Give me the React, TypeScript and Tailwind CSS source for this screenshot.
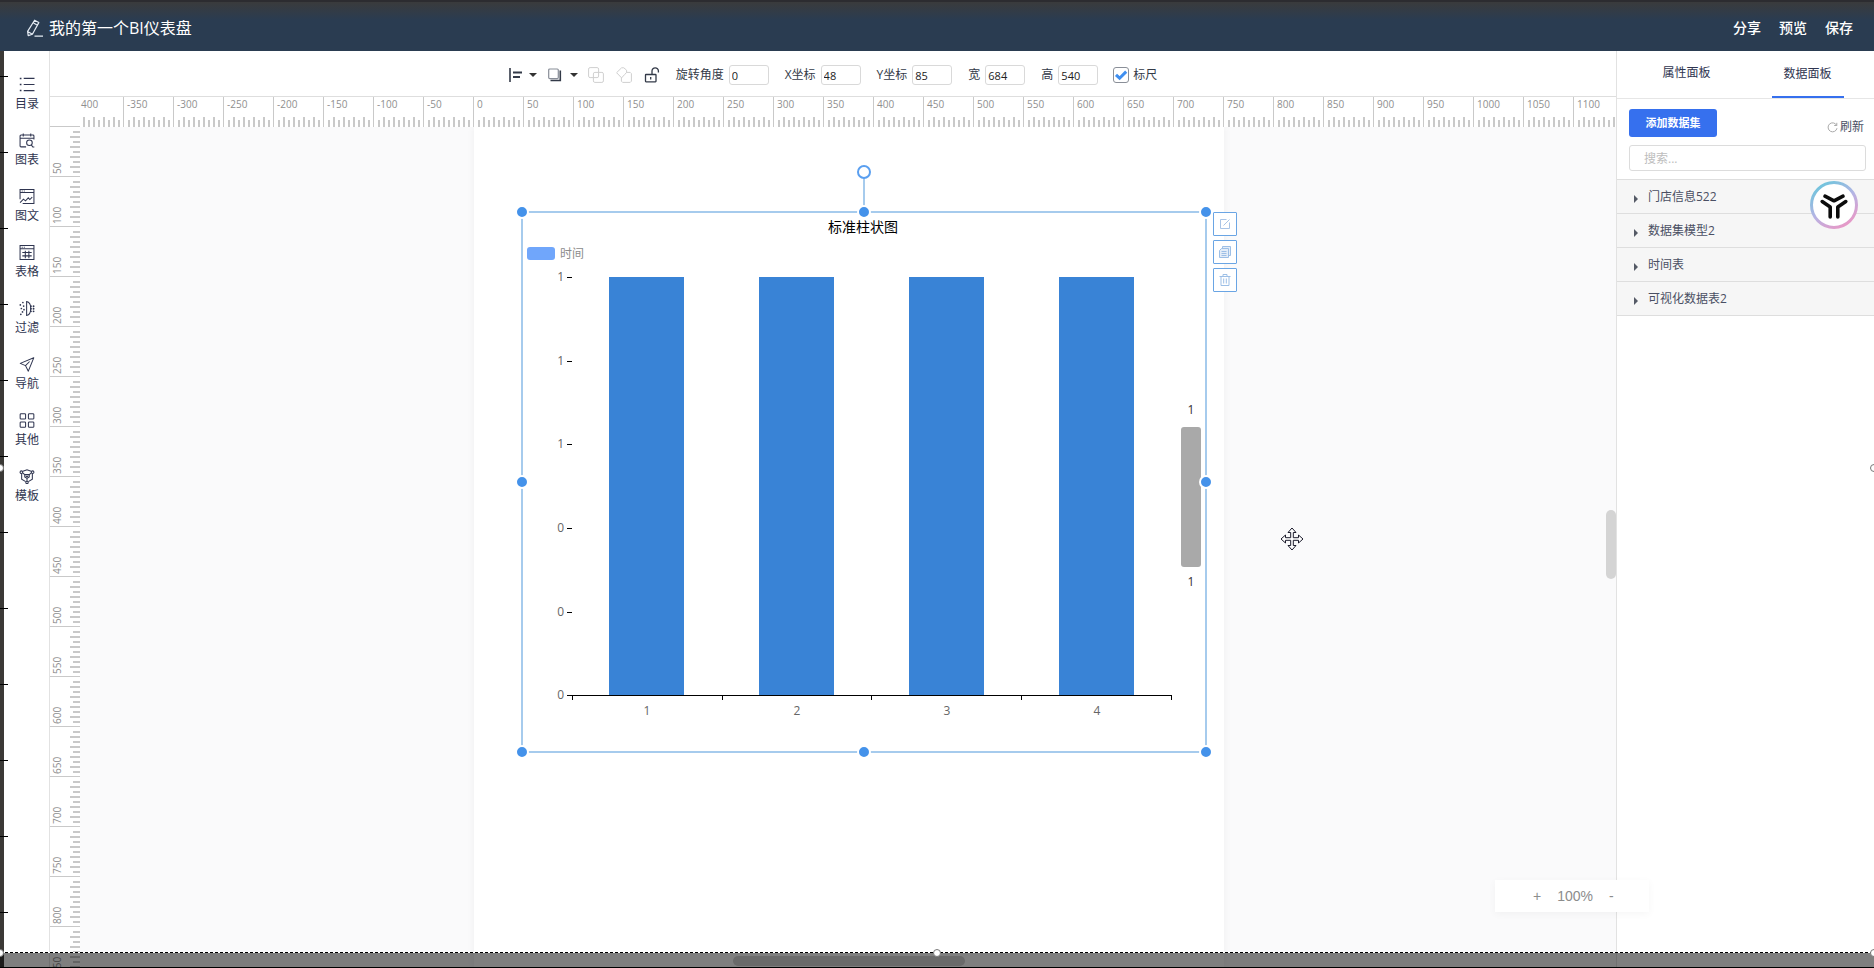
import React, { useState } from "react";

const ORIGIN_X = 394;
const H_START = -390;
const H_END = 1140;
const V_END = 850;

const MENU = [
  { label: "目录", icon: "list" },
  { label: "图表", icon: "chart" },
  { label: "图文", icon: "media" },
  { label: "表格", icon: "table" },
  { label: "过滤", icon: "filter" },
  { label: "导航", icon: "nav" },
  { label: "其他", icon: "other" },
  { label: "模板", icon: "template" },
];

const DATASETS = ["门店信息522", "数据集模型2", "时间表", "可视化数据表2"];

const FIELDS = [
  { id: "rotate", label: "旋转角度", value: "0" },
  { id: "x", label: "X坐标", value: "48" },
  { id: "y", label: "Y坐标", value: "85" },
  { id: "w", label: "宽", value: "684" },
  { id: "h", label: "高", value: "540" },
];

function range(from: number, to: number, step: number) {
  const out: number[] = [];
  for (let i = from; i <= to; i += step) out.push(i);
  return out;
}

function MenuIcon({ name }: { name: string }) {
  return (
    <svg className="w-4 h-4" viewBox="0 0 16 16" fill="none" stroke="#2f3550" strokeWidth="1.1">
      {name === "list" && (
        <>
          <path d="M4.500 1.500H16M4.500 8H16M4.500 14.500H16" strokeWidth="1.300" />
          <path d="M0.300 1.500h1.800M0.300 8h1.800M0.300 14.500h1.800" strokeWidth="1.600" />
        </>
      )}
      {name === "chart" && (
        <>
          <path d="M15.400 7V3.200a1 1 0 0 0-1-1H1.600a1 1 0 0 0-1 1v10.600a1 1 0 0 0 1 1H7M0.600 5.700h14.800M4 0.400v3.400M12 0.400v3.400" />
          <circle cx="10.600" cy="10.400" r="3" />
          <path d="M12.600 12.700l1.600 2.200h1.600" />
        </>
      )}
      {name === "media" && (
        <>
          <path d="M0.600 11V0.600h14.800v14.800H3.400M0.600 3.800h14.800" />
          <path d="M0.600 14.600l3.600-3.800 2.200 1.800 3-3.200 1.600 1.800 2.600-2.600" />
          <path d="M2.400 2.200h1M4.600 2.200h1" />
        </>
      )}
      {name === "table" && (
        <>
          <path d="M0.600 0.600h14.800v14.800H0.600zM0.600 4h14.800" />
          <path d="M2.400 2.300h1M4.600 2.300h1" />
          <path d="M3 8h10M3 11.600h10M6.200 6v8M10 6v8" />
        </>
      )}
      {name === "filter" && (
        <>
          <path d="M7.600 0.600v14.800c3.400-0.600 4.400-3.800 4.400-7.400S11 1.200 7.600 0.600z" />
          <g fill="#2f3550" stroke="none">
            <circle cx="3.600" cy="1.600" r="0.900" /><circle cx="0.900" cy="4.200" r="0.900" /><circle cx="4.400" cy="5.400" r="0.900" />
            <circle cx="2" cy="8" r="0.900" /><circle cx="4.800" cy="9.200" r="0.900" /><circle cx="3.200" cy="11.600" r="0.900" /><circle cx="1.400" cy="14.200" r="0.900" />
            <circle cx="12.200" cy="5.600" r="1" /><circle cx="12.200" cy="8.300" r="1" /><circle cx="12.200" cy="11" r="1" />
            <circle cx="15" cy="5.600" r="1" /><circle cx="15" cy="8.300" r="1" /><circle cx="15" cy="11" r="1" />
          </g>
        </>
      )}
      {name === "nav" && <path d="M15.200 0.900L0.800 6.800l5.600 2.400 3 5.900zM6.400 9.200l4.400-4.400" strokeLinejoin="round" />}
      {name === "other" && (
        <>
          <rect x="0.700" y="0.700" width="5.800" height="5.800" rx="1" />
          <rect x="9.500" y="0.700" width="5.800" height="5.800" rx="1" />
          <rect x="0.700" y="9.500" width="5.800" height="5.800" rx="1" />
          <rect x="9.500" y="9.500" width="5.800" height="5.800" rx="1" />
        </>
      )}
      {name === "template" && (
        <>
          <path d="M3.600 2.400L8 0.800l4.400 1.600M2.300 5v5.800l4.300 2.700M13.700 5v5.800l-4.300 2.700" />
          <circle cx="2" cy="3.400" r="1.400" />
          <circle cx="14" cy="3.400" r="1.400" />
          <circle cx="8" cy="14.300" r="1.300" />
          <path d="M3.400 4.200L5.600 6h4.800l2.200-1.800M5.600 6v2.400L8 10l2.400-1.600V6M8 10v3" />
          <path d="M6.600 7.400L8 8.300l1.400-0.900" />
        </>
      )}
    </svg>
  );
}

function HRuler() {
  return (
    <svg className="block h-[30px] flex-1 min-w-0 bg-white" fontSize="10" fill="#8f8f8f">
      {range(H_START, H_END, 5).map((v) => {
        const x = ORIGIN_X + v;
        const top = v % 50 === 0 ? 0 : v % 10 === 0 ? 20 : 23;
        return <rect key={v} x={x - 1} y={top} width={v % 50 === 0 ? 1 : 2} height={30 - top} fill="#c9c9c9" />;
      })}
      <text x="1" y="11">400</text>
      {range(-350, 1100, 50).map((v) => (
        <text key={v} x={ORIGIN_X + v + 3} y="11">{v}</text>
      ))}
    </svg>
  );
}

function VRuler() {
  return (
    <svg className="block w-[30px] shrink-0 h-full bg-white" fontSize="10" fill="#8f8f8f">
      {range(5, V_END, 5).map((v) => {
        const left = v % 50 === 0 ? 0 : v % 10 === 0 ? 20 : 23;
        return <rect key={v} x={left} y={v - 1} width={30 - left} height={v % 50 === 0 ? 1 : 2} fill="#c9c9c9" />;
      })}
      {range(50, V_END, 50).map((v) => (
        <text key={v} transform={`translate(11 ${v - 3}) rotate(-90)`}>{v}</text>
      ))}
    </svg>
  );
}

function BarChart() {
  const ticks = [
    { y: 65, label: "1" }, { y: 149, label: "1" }, { y: 232, label: "1" },
    { y: 316, label: "0" }, { y: 400, label: "0" }, { y: 483, label: "0" },
  ];
  return (
    <svg className="block w-full h-full" fontSize="12" fill="#666">
      <text x="341" y="20" fontSize="14" fill="#000" textAnchor="middle">标准柱状图</text>
      <rect x="5" y="35" width="28" height="13" rx="3" fill="#70a6fb" />
      <text x="38" y="46" fill="#8c8c8c">时间</text>
      {[1, 2, 3, 4].map((n, i) => (
        <g key={n}>
          <rect x={87 + i * 150} y="65" width="75" height="418" fill="#3983d6" />
          <text x={125 + i * 150} y="503" textAnchor="middle">{n}</text>
        </g>
      ))}
      {ticks.map((t) => (
        <g key={t.y}>
          <rect x="45" y={t.y} width="5" height="1" fill="#000" />
          <text x="42" y={t.y + 4} textAnchor="end">{t.label}</text>
        </g>
      ))}
      <rect x="50" y="483" width="600" height="1" fill="#000" />
      {[50, 200, 349, 499, 649].map((x) => <rect key={x} x={x} y="484" width="1" height="4" fill="#000" />)}
      <text x="669" y="202" textAnchor="middle" fill="#333">1</text>
      <rect x="659" y="215" width="20" height="140" rx="3" fill="#a9a9a9" />
      <text x="669" y="374" textAnchor="middle" fill="#333">1</text>
    </svg>
  );
}

function Selection() {
  const dots = [[0, 0], [342, 0], [684, 0], [0, 270], [684, 270], [0, 540], [342, 540], [684, 540]];
  return (
    <svg className="absolute inset-0 w-full h-full overflow-visible pointer-events-none">
      <rect x="0" y="0" width="684" height="540" fill="none" stroke="#a6cbed" strokeWidth="2" />
      <path d="M342 -34V0" stroke="#a6cbed" strokeWidth="2" />
      <circle cx="342" cy="-40" r="6" fill="#fff" stroke="#5a9ff0" strokeWidth="2" />
      {dots.map(([x, y]) => <circle key={`${x}-${y}`} cx={x} cy={y} r="6" fill="#4492ea" stroke="#fff" strokeWidth="2" />)}
    </svg>
  );
}

function WidgetTools() {
  const cls = "w-6 h-6 flex items-center justify-center bg-white border border-[#6aa5e4] rounded-[1px]";
  return (
    <div className="absolute left-[691px] top-0 flex flex-col gap-1">
      <button className={cls} aria-label="编辑">
        <svg className="w-3 h-3" viewBox="0 0 12 12" fill="none" stroke="#a9c4e6"><path d="M7.500 1.500h-6v9h9v-6M4.500 7.500l6-6" /></svg>
      </button>
      <button className={cls} aria-label="复制">
        <svg className="w-3 h-3" viewBox="0 0 12 12" fill="#e4edf8" stroke="#9dbfe6"><path d="M3.500 2.500v-2h8v9h-2M0.500 4.500l2-2h7v9h-9zM2.500 5.500h5M2.500 7.500h5M2.500 9.500h5" /></svg>
      </button>
      <button className={cls} aria-label="删除">
        <svg className="w-3 h-3" viewBox="0 0 12 12" fill="none" stroke="#9dbfe6"><path d="M0.500 2.500h11M4 2.500v-2h4v2M2 2.500v9h8v-9M4.700 4.500v5M7.300 4.500v5" /></svg>
      </button>
    </div>
  );
}

function Caret() {
  return <svg className="w-2 h-1" viewBox="0 0 8 4" fill="#333"><path d="M0 0h8L4 4z" /></svg>;
}

function Toolbar() {
  const [ruler, setRuler] = useState(true);
  return (
    <div className="h-[46px] pt-[3px] shrink-0 bg-white border-b border-[#dedede] flex items-center justify-center text-xs text-[#333a48]">
      <button className="flex items-center gap-[7px]" aria-label="对齐">
        <svg className="w-[13px] h-[14px]" viewBox="0 0 13 14" stroke="#333a48" fill="none"><path d="M1 0v14" strokeWidth="1.600" /><path d="M4 4.500h9M4 9h7" strokeWidth="2" /></svg>
        <Caret />
      </button>
      <button className="flex items-center gap-2 ml-[11px]" aria-label="层级">
        <svg className="w-[14px] h-[14px]" viewBox="0 0 14 14" fill="none"><rect x="0.700" y="1" width="9.600" height="9.600" rx="1" stroke="#888d97" strokeWidth="1.200" /><path d="M12.300 2.500v10H2.500" stroke="#333a48" strokeWidth="1.600" /></svg>
        <Caret />
      </button>
      <button className="ml-[10px]" aria-label="组合">
        <svg className="w-4 h-4" viewBox="0 0 16 16" fill="none" stroke="#cfcfcf"><rect x="0.600" y="0.600" width="10" height="10" rx="1.500" /><rect x="5.400" y="5.400" width="10" height="10" rx="1.500" /></svg>
      </button>
      <button className="ml-3" aria-label="取消组合">
        <svg className="w-4 h-4" viewBox="0 0 16 16" fill="none" stroke="#cfcfcf"><path d="M10.600 5.500V3.200L7.800 0.800H5.600L0.600 5.700l5 5.200M10.600 5.400h3.600l1.200 1.200v7.600l-1.200 1.200H6.600l-1.200-1.200V11l3.200-3.400z" strokeLinejoin="round" /></svg>
      </button>
      <button className="ml-3" aria-label="解锁">
        <svg className="w-4 h-4" viewBox="0 0 16 16" fill="none" stroke="#333a48" strokeWidth="1.300"><rect x="1.500" y="7.500" width="10.500" height="7.300" rx="0.500" /><path d="M8 7.500V4a3.200 3.200 0 0 1 6.400 0v1.500M6.700 10v2.600" /></svg>
      </button>
      {FIELDS.map((f) => (
        <div key={f.id} className="flex items-center gap-[5px] ml-4">
          <label htmlFor={f.id}>{f.label}</label>
          <input id={f.id} defaultValue={f.value} className="w-10 h-5 pl-[2px] border border-[#d9d9d9] rounded-[3px] text-[11px] text-[#222] bg-white outline-none" />
        </div>
      ))}
      <label className="flex items-center gap-1 ml-[15px]">
        <span className="relative w-4 h-4 block">
          <input type="checkbox" checked={ruler} onChange={() => setRuler(!ruler)} className="appearance-none block w-4 h-4 border border-[#8a8f98] rounded-[3px] bg-white" />
          {ruler && <svg className="absolute inset-0 w-4 h-4 pointer-events-none" viewBox="0 0 16 16" fill="none" stroke="#3f8ff0" strokeWidth="3"><path d="M3 7.800l3.600 3.400 6.600-6.600" /></svg>}
        </span>
        标尺
      </label>
    </div>
  );
}

function Panel() {
  return (
    <aside className="w-[258px] shrink-0 bg-white border-l border-[#e2e2e2] text-xs text-[#4a4f63]">
      <div className="h-12 pl-[9px] pr-[6px] border-b border-[#e6e6e6] flex text-[#2f3550]">
        <button className="flex-1 pb-1">属性面板</button>
        <button className="flex-1 flex flex-col items-center">
          <span className="flex-1 flex items-center">数据面板</span>
          <span className="w-[72px] h-[2px] bg-[#3670ee]"></span>
        </button>
      </div>
      <div className="pl-3 pt-[10px] pb-2 pr-2">
        <div className="flex justify-between items-end">
          <button className="w-[88px] h-7 rounded-[3px] bg-[#3670ee] text-white text-[11px] font-bold">添加数据集</button>
          <button className="flex items-center gap-[2px] pb-[2px] pr-[2px]">
            <svg className="w-[11px] h-[11px]" viewBox="0 0 11 11" fill="none" stroke="#aaa"><path d="M9.600 3.300A4.500 4.500 0 1 0 10 6.200M9.800 0.800v2.700H7.200" /></svg>
            刷新
          </button>
        </div>
        <input aria-label="搜索" placeholder="搜索..." className="mt-2 w-full h-[26px] pl-[14px] border border-[#dcdcdc] rounded-[3px] outline-none placeholder:text-[#bdbdbd]" />
      </div>
      <ul>
        {DATASETS.map((d) => (
          <li key={d} className="border-t border-[#dedede] last:border-b">
            <button className="w-full h-[33px] pl-[17px] flex items-center gap-[10px] bg-[#f6f6f6] text-left">
              <svg className="w-1 h-2 mt-1" viewBox="0 0 4 8" fill="#555a66"><path d="M0 0l4 4-4 4z" /></svg>
              {d}
            </button>
          </li>
        ))}
      </ul>
    </aside>
  );
}

function Logo() {
  return (
    <svg className="absolute right-4 top-[181px] w-12 h-12" viewBox="0 0 48 48" fill="none">
      <defs>
        <linearGradient id="ring" x1="0.200" y1="0" x2="0.800" y2="1">
          <stop offset="0" stopColor="#6cc5dc" />
          <stop offset="0.500" stopColor="#b5b4e4" />
          <stop offset="1" stopColor="#ec96c4" />
        </linearGradient>
      </defs>
      <circle cx="24" cy="24" r="22.500" fill="#fff" stroke="url(#ring)" strokeWidth="3" />
      <path d="M15 15.200l9 4.600 9-4.600M12.200 20.600l8 5.400v10M35.800 20.600l-8 5.400v10" stroke="#0c0c0c" strokeWidth="3.600" strokeLinecap="round" strokeLinejoin="round" />
    </svg>
  );
}

export default function App() {
  return (
    <div className="relative h-screen w-full overflow-hidden flex flex-col bg-[#3b3936] font-['Open_Sans','Noto_Sans_CJK_SC',sans-serif]">
      <header className="h-[51px] shrink-0 pt-[2px] pl-[26px] pr-[21px] border-t-2 border-[#2c2c30] bg-linear-to-b from-[#3a3b3c] to-[#2a3c51] to-[18px] flex items-center justify-between text-white">
        <div className="flex items-center gap-[6px]">
          <svg className="w-[17px] h-[18px]" viewBox="0 0 17 18" fill="none" stroke="#e4ebf3" strokeWidth="1.200" strokeLinejoin="round"><path d="M8.600 1.200l4.200 2.400-6.400 11.600-4.200 1.400-0.600-4.200zM7.200 3.800l4.200 2.400M1.600 12.400l4.800 2.800M8.500 17.200H17" /></svg>
          <h1 className="text-base">我的第一个BI仪表盘</h1>
        </div>
        <nav className="flex gap-[18px] text-sm font-medium">
          <button>分享</button>
          <button>预览</button>
          <button>保存</button>
        </nav>
      </header>

      <div className="flex-1 min-h-0 flex pl-1">
        <nav className="w-[46px] shrink-0 pt-[26px] pl-px bg-white border-r border-[#e2e2e2] flex flex-col gap-5 items-center">
          {MENU.map((m) => (
            <button key={m.label} className="h-9 flex flex-col items-center gap-[3px] text-xs leading-[18px] text-[#2f3550]">
              <MenuIcon name={m.icon} />
              {m.label}
            </button>
          ))}
        </nav>

        <main className="flex-1 min-w-0 flex flex-col">
          <Toolbar />
          <div className="flex shrink-0 bg-white">
            <div className="w-[30px] shrink-0 border-b border-[#c9c9c9]"></div>
            <HRuler />
          </div>
          <div className="flex-1 min-h-0 flex">
            <VRuler />
            <div className="relative flex-1 min-w-0 bg-[#fafafb] overflow-hidden">
              <div className="absolute left-[394px] top-0 bottom-0 w-[750px] bg-white shadow-[0_0_8px_rgba(0,0,0,0.05)]">
                <div className="absolute left-12 top-[85px] w-[684px] h-[540px]">
                  <BarChart />
                  <Selection />
                  <WidgetTools />
                </div>
              </div>
              <svg className="absolute left-[1200px] top-[400px] w-6 h-6" viewBox="0 0 24 24" fill="#fff" stroke="#1a1a2a" strokeLinejoin="round">
                <path d="M12 1l4 4.500h-2.700v5.200h5.200V8L23 12l-4.500 4v-2.700h-5.200v5.200H16L12 23l-4-4.500h2.700v-5.200H5.500V16L1 12l4.500-4v2.700h5.200V5.500H8z" />
              </svg>
              <div className="absolute right-0 top-[383px] w-[10px] h-[69px] rounded-full bg-[#d4d4d4]"></div>
              <div className="absolute left-[653px] bottom-[2px] w-[232px] h-[10px] rounded-full bg-[#d4d4d4]"></div>
            </div>
          </div>
        </main>

        <Panel />
      </div>

      <Logo />
      <div className="absolute right-[225px] bottom-[56px] w-[154px] h-8 bg-white shadow-[0_2px_8px_rgba(0,0,0,0.04)] flex items-center pl-[38px] gap-4 text-sm text-[#8c8c8c] font-['Liberation_Sans',sans-serif]">
        <button aria-label="放大">+</button>
        <span>100%</span>
        <button aria-label="缩小">-</button>
      </div>

      {/* frame ticks, crop line and grips over the page edges */}
      {range(76, 912, 76).map((y) => (
        <div key={y} className="absolute left-0 w-2 h-px bg-black" style={{ top: y }}></div>
      ))}
      <div className="absolute inset-x-0 bottom-0 h-[15px] bg-black/50 border-b border-black"></div>
      <div className="absolute inset-x-0 bottom-[15px] h-px bg-[repeating-linear-gradient(90deg,#000_0_3px,#fff_3px_5px)]"></div>
      <div className="absolute -left-1 top-[464px] w-2 h-2 rounded-full bg-white border border-[#777]"></div>
      <div className="absolute -right-1 top-[464px] w-2 h-2 rounded-full bg-white border border-[#777]"></div>
      <div className="absolute -left-1 bottom-[11px] w-2 h-2 rounded-full bg-white border border-[#777]"></div>
      <div className="absolute -right-1 bottom-[11px] w-2 h-2 rounded-full bg-white border border-[#777]"></div>
      <div className="absolute left-1/2 -ml-1 bottom-[11px] w-2 h-2 rounded-full bg-white border border-[#777]"></div>
    </div>
  );
}
